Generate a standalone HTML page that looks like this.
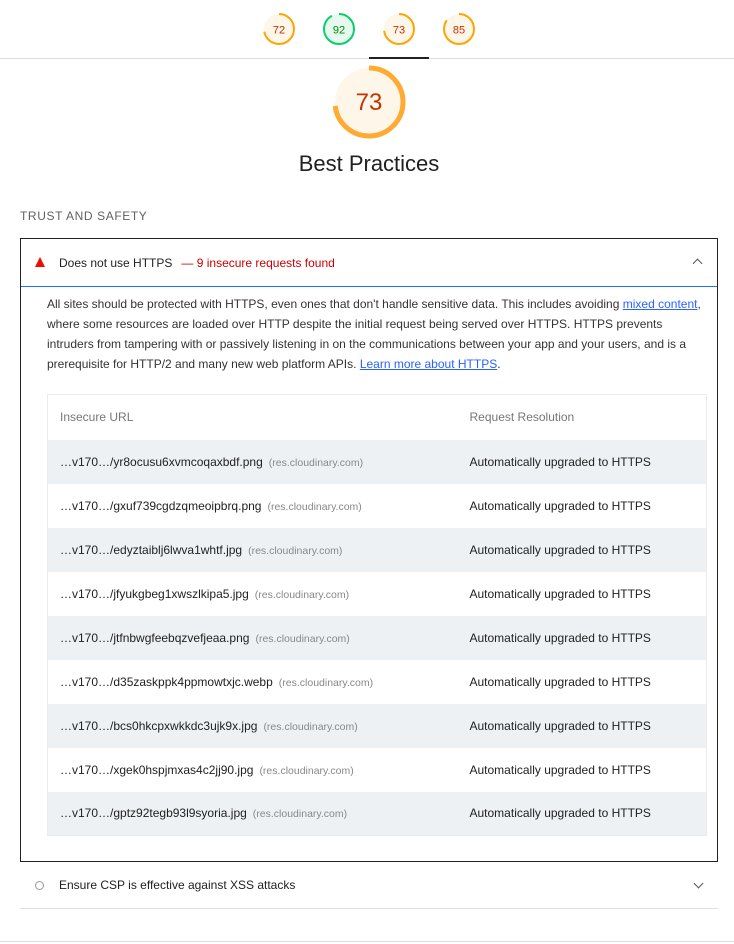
<!DOCTYPE html>
<html><head><meta charset="utf-8"><style>
*{box-sizing:border-box;margin:0;padding:0}
body{width:734px;height:944px;background:#fff;font-family:"Liberation Sans",Arial,sans-serif;color:#212121;position:relative;overflow:hidden}
.g{position:absolute}
.topline{position:absolute;left:0;top:58px;width:734px;height:1px;background:#ddd}
.tab{position:absolute;left:369px;top:57px;width:60px;height:2px;background:#212121}
.title{position:absolute;top:151px;left:0;width:738px;text-align:center;font-size:22px;color:#212121}
.sec{position:absolute;left:20px;top:209px;font-size:12px;letter-spacing:.6px;color:#616161}
.box{position:absolute;left:20px;top:238px;width:698px;height:624px;border:1px solid #212121}
.hdr{height:48px;border-bottom:1px solid #1a73e8;font-size:12px;display:flex;align-items:center;padding-left:38px}
.tri{position:absolute;left:14px;top:18px;width:0;height:0;border-left:5.5px solid transparent;border-right:5.5px solid transparent;border-bottom:10px solid #eb0f00}
.red{color:#c00;margin-left:9px}
.chev{position:absolute;right:16px;top:21px;width:7px;height:7px;border-left:1.5px solid #555;border-top:1.5px solid #555;transform:rotate(45deg)}
.desc{position:absolute;left:26px;top:55px;width:660px;font-size:12px;line-height:20px;color:#333}
.desc a{text-decoration:underline;color:#2962ff}
table{position:absolute;left:26px;top:155px;width:660px;border-collapse:collapse;border:1px solid #ebebeb;font-size:12px}
td{height:44px;padding-left:12px}
tr:nth-child(even) td{background:#eef1f4}
th{height:45px;text-align:left;font-weight:normal;color:#777;padding-left:12px}
td:first-child{width:410px}
.h{color:#888;font-size:10.5px;margin-left:6px}
.row2{position:absolute;left:20px;top:862px;width:698px;height:47px;border-bottom:1px solid #e0e0e0;font-size:12px;display:flex;align-items:center;padding-left:39px}
.circ{position:absolute;left:15px;top:19px;width:9px;height:9px;border:1.5px solid #999;border-radius:50%}
.bot{position:absolute;left:0;top:941px;width:734px;height:3px;border-top:1px solid #ddd}
</style></head><body>
<svg class="g" style="left:262px;top:12px" width="34" height="34"><circle cx="17" cy="17" r="15" fill="#fff6ea"/><circle cx="17" cy="17" r="15" fill="none" stroke="#ffa400" stroke-width="2" stroke-dasharray="67.9 94.2" transform="rotate(-90 17 17)"/><text x="17" y="21.5" text-anchor="middle" font-size="11" fill="#c33300" font-family="Liberation Sans">72</text></svg>
<svg class="g" style="left:322px;top:12px" width="34" height="34"><circle cx="17" cy="17" r="15" fill="#e6f9ee"/><circle cx="17" cy="17" r="15" fill="none" stroke="#0cce6b" stroke-width="2" stroke-dasharray="86.7 94.2" transform="rotate(-90 17 17)"/><text x="17" y="21.5" text-anchor="middle" font-size="11" fill="#008800" font-family="Liberation Sans">92</text></svg>
<svg class="g" style="left:382px;top:12px" width="34" height="34"><circle cx="17" cy="17" r="15" fill="#fff6ea"/><circle cx="17" cy="17" r="15" fill="none" stroke="#ffa400" stroke-width="2" stroke-dasharray="68.8 94.2" transform="rotate(-90 17 17)"/><text x="17" y="21.5" text-anchor="middle" font-size="11" fill="#c33300" font-family="Liberation Sans">73</text></svg>
<svg class="g" style="left:442px;top:12px" width="34" height="34"><circle cx="17" cy="17" r="15" fill="#fff6ea"/><circle cx="17" cy="17" r="15" fill="none" stroke="#ffa400" stroke-width="2" stroke-dasharray="80 94.2" transform="rotate(-90 17 17)"/><text x="17" y="21.5" text-anchor="middle" font-size="11" fill="#c33300" font-family="Liberation Sans">85</text></svg>
<div class="topline"></div><div class="tab"></div>
<svg class="g" style="left:332px;top:65px" width="74" height="74"><circle cx="37" cy="37" r="34" fill="#fff6ea"/><circle cx="37" cy="37" r="34" fill="none" stroke="#ffaa33" stroke-width="5" stroke-dasharray="156 213.6" transform="rotate(-90 37 37)"/><text x="37" y="45" text-anchor="middle" font-size="24" fill="#c33300" font-family="Liberation Sans">73</text></svg>
<div class="title">Best Practices</div>
<div class="sec">TRUST AND SAFETY</div>
<div class="box">
<div class="hdr"><div class="tri"></div>Does not use HTTPS <span class="red">— 9 insecure requests found</span><div class="chev"></div></div>
<div class="desc">All sites should be protected with HTTPS, even ones that don't handle sensitive data. This includes avoiding <a>mixed content</a>, where some resources are loaded over HTTP despite the initial request being served over HTTPS. HTTPS prevents intruders from tampering with or passively listening in on the communications between your app and your users, and is a prerequisite for HTTP/2 and many new web platform APIs. <a>Learn more about HTTPS</a>.</div>
<table>
<tr><th>Insecure URL</th><th>Request Resolution</th></tr>
<tr><td>…v170…/yr8ocusu6xvmcoqaxbdf.png<span class="h">(res.cloudinary.com)</span></td><td>Automatically upgraded to HTTPS</td></tr>
<tr><td>…v170…/gxuf739cgdzqmeoipbrq.png<span class="h">(res.cloudinary.com)</span></td><td>Automatically upgraded to HTTPS</td></tr>
<tr><td>…v170…/edyztaiblj6lwva1whtf.jpg<span class="h">(res.cloudinary.com)</span></td><td>Automatically upgraded to HTTPS</td></tr>
<tr><td>…v170…/jfyukgbeg1xwszlkipa5.jpg<span class="h">(res.cloudinary.com)</span></td><td>Automatically upgraded to HTTPS</td></tr>
<tr><td>…v170…/jtfnbwgfeebqzvefjeaa.png<span class="h">(res.cloudinary.com)</span></td><td>Automatically upgraded to HTTPS</td></tr>
<tr><td>…v170…/d35zaskppk4ppmowtxjc.webp<span class="h">(res.cloudinary.com)</span></td><td>Automatically upgraded to HTTPS</td></tr>
<tr><td>…v170…/bcs0hkcpxwkkdc3ujk9x.jpg<span class="h">(res.cloudinary.com)</span></td><td>Automatically upgraded to HTTPS</td></tr>
<tr><td>…v170…/xgek0hspjmxas4c2jj90.jpg<span class="h">(res.cloudinary.com)</span></td><td>Automatically upgraded to HTTPS</td></tr>
<tr><td>…v170…/gptz92tegb93l9syoria.jpg<span class="h">(res.cloudinary.com)</span></td><td>Automatically upgraded to HTTPS</td></tr>
</table>
</div>
<div class="row2"><div class="circ"></div>Ensure CSP is effective against XSS attacks<div class="chev" style="transform:rotate(225deg);top:18px"></div></div>
<div class="bot"></div>
</body></html>
